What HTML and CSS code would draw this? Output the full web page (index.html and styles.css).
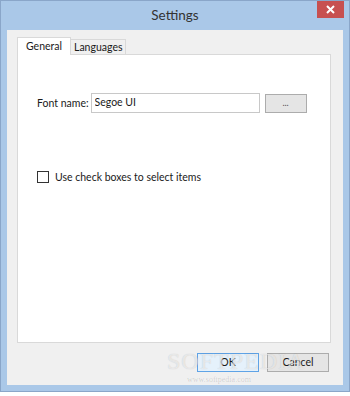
FILE: index.html
```html
<!DOCTYPE html>
<html lang="en">
<head>
  <meta charset="UTF-8" />
  <title>Settings</title>
  <link rel="stylesheet" href="styles.css">
</head>
<body>

  <div class="window">
    <div class="titlebar">
      <span class="title">Settings</span>
      <div class="close">
        <svg width="9" height="9" viewBox="0 0 9 9"><path d="M1 1 L8 8 M8 1 L1 8" stroke="#fff" stroke-width="2"/></svg>
      </div>
    </div>

    <div class="client">
      <div class="tabs">
        <div class="tab active">General</div>
        <div class="tab">Languages</div>
      </div>

      <div class="panel">
        <div class="font-row">
          <label for="font">Font name:</label>
          <input type="text" id="font" value="Segoe UI" />
          <button class="btn small">...</button>
        </div>

        <div class="check-row">
          <span class="checkbox"></span>
          <span>Use check boxes to select items</span>
        </div>
      </div>

      <div class="actions">
        <button class="btn default">OK</button>
        <button class="btn">Cancel</button>
      </div>

      <div class="watermark">SOFTPEDIA</div>
      <div class="watermark-url">www.softpedia.com</div>
    </div>
  </div>

</body>
</html>
```

FILE: styles.css
```css
body {
  margin: 0;
  background-color: #fff;
  font-family: Lato, "Noto Sans", sans-serif;
  font-size: 10.5px;
  color: #1a1a1a;
}
.window {
  width: 350px;
  height: 392px;
  box-sizing: border-box;
  border: 1px solid #8aa6c9;
  background-color: #aac8e8;
  padding: 0 6px 6px;
  display: flex;
  flex-direction: column;
}
.titlebar {
  height: 29px;
  margin: 0 -6px;
  position: relative;
  display: flex;
  align-items: center;
  justify-content: center;
}
.title {
  font-size: 13.5px;
  color: #333;
  margin-top: -2px;
}
.close {
  position: absolute;
  top: 0;
  right: 5px;
  width: 27px;
  height: 17px;
  background-color: #c75050;
  display: flex;
  align-items: center;
  justify-content: center;
}
.client {
  flex: 1;
  background-color: #f0f0f0;
  padding: 7px 12px 0 10px;
  position: relative;
  display: flex;
  flex-direction: column;
}
.tabs {
  display: flex;
  align-items: flex-end;
  height: 17px;
  position: relative;
  z-index: 1;
}
.tab {
  height: 14px;
  line-height: 14px;
  padding: 0 3px 0 3px;
  border: 1px solid #d9d9d9;
  border-bottom: none;
  border-left: none;
  background-color: #f0f0f0;
}
.tab.active {
  height: 17px;
  line-height: 17px;
  padding: 0 8px 0 8px;
  border-left: 1px solid #d9d9d9;
  background-color: #fff;
  margin-bottom: -1px;
}
.panel {
  height: 289px;
  box-sizing: border-box;
  background-color: #fff;
  border: 1px solid #d9d9d9;
  padding: 38px 19px 0;
}
.font-row {
  display: flex;
  align-items: center;
}
.font-row label {
  margin-right: 2px;
  white-space: nowrap;
}
.font-row input {
  width: 169px;
  height: 20px;
  box-sizing: border-box;
  border: 1px solid #c8c8c8;
  padding: 0 3px 3px;
  font-family: inherit;
  font-size: 10.5px;
  color: #1a1a1a;
  margin-right: 5px;
  outline: none;
}
.btn {
  height: 19px;
  width: 62px;
  box-sizing: border-box;
  background-color: #e5e5e5;
  border: 1px solid #acacac;
  font-family: inherit;
  font-size: 10.5px;
  color: #1a1a1a;
  padding: 0 0 1px;
}
.btn.small {
  width: 42px;
  font-size: 9px;
  color: #555;
}
.btn.default {
  border-color: #5fa3e6;
  background-color: #e5f1fb;
}
.check-row {
  margin-top: 58px;
  display: flex;
  align-items: center;
}
.checkbox {
  width: 10px;
  height: 10px;
  border: 1px solid #333;
  background-color: #fff;
  margin-right: 6px;
}
.actions {
  display: flex;
  justify-content: flex-end;
  gap: 8px;
  margin-top: 10px;
  padding-right: 2px;
}
.watermark {
  position: absolute;
  left: 160px;
  top: 318px;
  font-family: "Liberation Serif", serif;
  font-size: 24px;
  letter-spacing: 1px;
  color: rgba(255, 255, 255, 0.6);
  text-shadow: 0 0 1px rgba(0, 0, 0, 0.2);
  pointer-events: none;
}
.watermark-url {
  position: absolute;
  left: 180px;
  top: 345px;
  font-family: "Liberation Serif", serif;
  font-size: 8px;
  color: rgba(0, 0, 0, 0.15);
}
```
